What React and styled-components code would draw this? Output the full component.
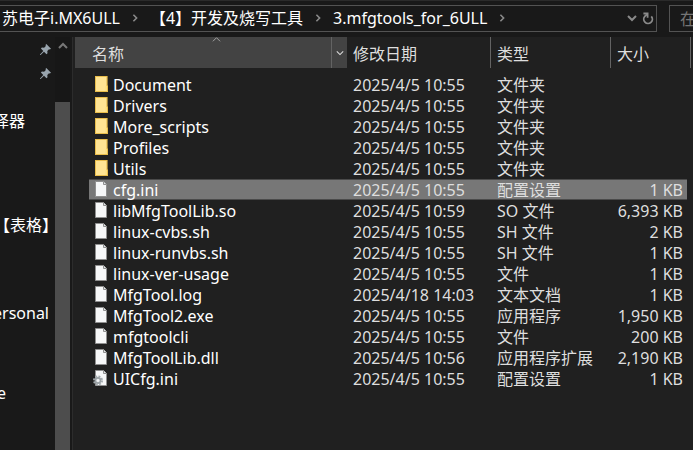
import React, { useState } from 'react';
import styled, { createGlobalStyle } from 'styled-components';

const crumbs = ['苏电子i.MX6ULL', '【4】开发及烧写工具', '3.mfgtools_for_6ULL'];

const navItems = [
  { pinned: true },
  { pinned: true },
  {},
  { label: '译器', width: 25 },
  {},
  {},
  {},
  { label: '【表格】', width: 58, group: true },
  { group: true },
  {},
  { label: 'ersonal', width: 49, group: true },
  {},
  {},
  { label: 'e', width: 6, group: true },
];

const files = [
  { name: 'Document', date: '2025/4/5 10:55', type: '文件夹', icon: 'folder' },
  { name: 'Drivers', date: '2025/4/5 10:55', type: '文件夹', icon: 'folder' },
  { name: 'More_scripts', date: '2025/4/5 10:55', type: '文件夹', icon: 'folder' },
  { name: 'Profiles', date: '2025/4/5 10:55', type: '文件夹', icon: 'folder' },
  { name: 'Utils', date: '2025/4/5 10:55', type: '文件夹', icon: 'folder' },
  { name: 'cfg.ini', date: '2025/4/5 10:55', type: '配置设置', size: '1 KB' },
  { name: 'libMfgToolLib.so', date: '2025/4/5 10:59', type: 'SO 文件', size: '6,393 KB' },
  { name: 'linux-cvbs.sh', date: '2025/4/5 10:55', type: 'SH 文件', size: '2 KB' },
  { name: 'linux-runvbs.sh', date: '2025/4/5 10:55', type: 'SH 文件', size: '1 KB' },
  { name: 'linux-ver-usage', date: '2025/4/5 10:55', type: '文件', size: '1 KB' },
  { name: 'MfgTool.log', date: '2025/4/18 14:03', type: '文本文档', size: '1 KB' },
  { name: 'MfgTool2.exe', date: '2025/4/5 10:55', type: '应用程序', size: '1,950 KB' },
  { name: 'mfgtoolcli', date: '2025/4/5 10:55', type: '文件', size: '200 KB' },
  { name: 'MfgToolLib.dll', date: '2025/4/5 10:56', type: '应用程序扩展', size: '2,190 KB' },
  { name: 'UICfg.ini', date: '2025/4/5 10:55', type: '配置设置', size: '1 KB', icon: 'config' },
];

const Chevron = ({ dir = 'down', size = 9, weight = 1.5 }) => {
  const paths = {
    down: 'M1 3l4 4 4-4',
    up: 'M1 7l4-4 4 4',
    right: 'M3 1l4 4-4 4',
  };
  return (
    <svg width={size} height={size} viewBox="0 0 10 10" fill="none" stroke="currentColor" strokeWidth={weight} aria-hidden="true">
      <path d={paths[dir]} />
    </svg>
  );
};

const RefreshIcon = () => (
  <svg width="12" height="13" viewBox="0 0 12 13" fill="none" stroke="currentColor" strokeWidth="1.8" aria-hidden="true">
    <path d="M9.3 4.3A4.3 4.3 0 1 1 3 4.1L5.2 2.3" />
    <path d="M1.4 1.5h4.2v4.2" />
  </svg>
);

const PinIcon = () => (
  <svg width="11" height="11" viewBox="0 0 11 11" aria-hidden="true">
    <path d="M6.3 0L11 4.7 9.8 5.5 9 5.2 7.3 7l.2 2.2-1 1L4 7.7.6 11H0v-.6L3.3 7 .9 4.6l1-1 2.2.2L5.9 2 5.5 1z" fill="#99a5ae" />
  </svg>
);

const FolderIcon = () => (
  <svg width="16" height="16" viewBox="0 0 16 16" aria-hidden="true">
    <path d="M2 0h12.6v9.6H15V16H2z" fill="#e9bd4b" />
    <path d="M3 1h10.4v14H3z" fill="#ffe494" />
    <path d="M12.5 10H14v5h-1.5z" fill="#ffe07d" />
  </svg>
);

const FileIcon = ({ config }) => (
  <svg width="16" height="16" viewBox="0 0 16 16" aria-hidden="true">
    <path d="M2.5.5h8L13.5 3.5v12h-11z" fill="#f6f7f8" stroke="#8f8f8f" />
    <path d="M10.5.5v3h3" fill="#dfe3e5" stroke="#8f8f8f" />
    {config && (
      <g>
        <circle cx="5" cy="10.5" r="4.1" fill="none" stroke="#a3aaae" strokeWidth="1.8" strokeDasharray="1.9 1.32" />
        <circle cx="5" cy="10.5" r="2.6" fill="#e5e9eb" stroke="#9aa1a5" strokeWidth="1.6" />
        <circle cx="5" cy="10.5" r="1" fill="#f6f7f8" />
      </g>
    )}
  </svg>
);

const EntryIcon = ({ kind }) =>
  kind === 'folder' ? <FolderIcon /> : <FileIcon config={kind === 'config'} />;

const App = () => {
  const [selected, setSelected] = useState('cfg.ini');

  return (
    <Window>
      <GlobalStyle />
      <Toolbar>
        <AddressBar aria-label="地址">
          {crumbs.map((crumb) => (
            <React.Fragment key={crumb}>
              <Crumb href="#">{crumb}</Crumb>
              <CrumbArrow>
                <Chevron dir="right" size={8} weight={2} />
              </CrumbArrow>
            </React.Fragment>
          ))}
          <BarActions>
            <BarButton aria-label="历史记录">
              <Chevron size={10} weight={2} />
            </BarButton>
            <BarButton aria-label="刷新">
              <RefreshIcon />
            </BarButton>
          </BarActions>
        </AddressBar>
        <SearchInput type="text" aria-label="搜索" placeholder="在" />
      </Toolbar>

      <Body>
        <NavPane>
          <NavList>
            {navItems.map((item, i) => (
              <NavItem key={i} $group={item.group}>
                {item.pinned && (
                  <PinSlot>
                    <PinIcon />
                  </PinSlot>
                )}
                {item.label && <NavLabel href="#" $width={item.width}>{item.label}</NavLabel>}
              </NavItem>
            ))}
          </NavList>
          <ScrollTrack>
            <ScrollButton aria-label="向上滚动">
              <Chevron dir="up" size={10} weight={2} />
            </ScrollButton>
            <ScrollThumb />
          </ScrollTrack>
        </NavPane>

        <FilePane>
          <FileTable>
            <colgroup>
              <Col $width={14} />
              <Col $width={258} />
              <Col $width={144} />
              <Col $width={120} />
              <Col $width={76} />
              <Col $width={4} />
            </colgroup>
            <thead>
              <tr>
                <HeadCell colSpan={2} $active>
                  <SortMark>
                    <Chevron dir="up" weight={1} />
                  </SortMark>
                  <HeadInner>
                    <HeadButton $indent={17}>名称</HeadButton>
                    <FilterButton aria-label="筛选">
                      <Chevron size={8} weight={1.3} />
                    </FilterButton>
                  </HeadInner>
                </HeadCell>
                <HeadCell $line><HeadButton $indent={6}>修改日期</HeadButton></HeadCell>
                <HeadCell $line><HeadButton $indent={6}>类型</HeadButton></HeadCell>
                <HeadCell $line colSpan={2}><HeadButton $indent={6}>大小</HeadButton></HeadCell>
              </tr>
            </thead>
            <tbody>
              {files.map((file) => (
                <FileRow
                  key={file.name}
                  $selected={file.name === selected}
                  onClick={() => setSelected(file.name)}
                >
                  <Gutter />
                  <NameCell>
                    <NameInner>
                      <EntryIcon kind={file.icon} />
                      {file.name}
                    </NameInner>
                  </NameCell>
                  <Cell>{file.date}</Cell>
                  <Cell>{file.type}</Cell>
                  <SizeCell>{file.size}</SizeCell>
                  <Gutter />
                </FileRow>
              ))}
            </tbody>
          </FileTable>
        </FilePane>
      </Body>
    </Window>
  );
};

export default App;

const GlobalStyle = createGlobalStyle`
  * {
    box-sizing: border-box;
  }

  body {
    margin: 0;
    background: #191919;
    overflow: hidden;
  }

  body, button, input {
    font-family: 'Noto Sans', 'Noto Sans CJK SC', sans-serif;
    font-size: 16px;
  }

  button {
    border: 0;
    padding: 0;
    background: none;
    color: inherit;
  }

  svg {
    display: block;
    flex: none;
  }
`;

const Window = styled.div`
  display: flex;
  flex-direction: column;
  height: 100vh;
  background: #191919;
  color: #dedede;
  border-top: 1px solid #2b2b2b;
`;

const Toolbar = styled.div`
  display: flex;
  gap: 12px;
  padding-top: 4px;
  padding-bottom: 5px;
`;

const AddressBar = styled.nav`
  flex: 1;
  min-width: 0;
  display: flex;
  align-items: center;
  height: 27px;
  padding-left: 2px;
  padding-bottom: 1px;
  border: 1px solid #535353;
  border-left: 0;
  white-space: nowrap;
  overflow: hidden;
`;

const Crumb = styled.a`
  color: #fff;
  text-decoration: none;
  line-height: 24px;
`;

const CrumbArrow = styled.span`
  display: flex;
  justify-content: center;
  width: 30px;
  color: #8a8a8a;
`;

const BarActions = styled.div`
  display: flex;
  align-self: stretch;
  margin-left: auto;
  color: #8a8a8a;
`;

const BarButton = styled.button`
  display: flex;
  align-items: center;
  justify-content: center;
  width: 16px;
`;

const SearchInput = styled.input`
  flex: none;
  width: 24px;
  height: 27px;
  padding: 0 0 0 10px;
  border: 1px solid #535353;
  border-right: 0;
  border-radius: 0;
  background: #191919;
  color: #fff;
  outline: none;

  &::placeholder {
    color: #757575;
    opacity: 1;
  }
`;

const Body = styled.div`
  flex: 1;
  min-height: 0;
  display: flex;
`;

const NavPane = styled.aside`
  flex: none;
  display: flex;
  width: 75px;
  border-right: 2px solid #202020;
  box-shadow: inset -1px 0 #2c2c2c;
`;

const NavList = styled.div`
  width: 55px;
  overflow: hidden;
`;

const NavItem = styled.div`
  display: flex;
  align-items: center;
  height: 24px;
  margin-top: ${(props) => (props.$group ? '8px' : '0')};
`;

const PinSlot = styled.span`
  margin-left: 40px;
`;

const NavLabel = styled.a`
  display: flex;
  justify-content: flex-end;
  width: ${(props) => props.$width}px;
  color: #fff;
  line-height: 24px;
  text-decoration: none;
  white-space: nowrap;
`;

const ScrollTrack = styled.div`
  display: flex;
  flex-direction: column;
  width: 15px;
  background: #171717;
`;

const ScrollButton = styled.button`
  display: flex;
  justify-content: center;
  height: 65px;
  padding-top: 4px;
  color: #777;
`;

const ScrollThumb = styled.div`
  flex: 1;
  background: #4d4d4d;
`;

const FilePane = styled.main`
  flex: 1;
  min-width: 0;
  overflow: hidden;
  background: #202020;
`;

const FileTable = styled.table`
  table-layout: fixed;
  width: 616px;
  border-collapse: separate;
  border-spacing: 0;
  white-space: nowrap;

  thead::after {
    content: '';
    display: table-row;
    height: 6px;
  }
`;

const Col = styled.col`
  width: ${(props) => props.$width}px;
`;

const HeadCell = styled.th`
  position: relative;
  height: 31px;
  padding: 0;
  font-weight: 400;
  text-align: left;
  background: ${(props) => (props.$active ? '#434343' : 'transparent')};
  border-right: ${(props) => (props.$line ? '1px solid #636363' : '0')};
`;

const HeadInner = styled.div`
  display: flex;
  height: 31px;
`;

const HeadButton = styled.button`
  flex: 1;
  padding-left: ${(props) => props.$indent}px;
  text-align: left;
`;

const FilterButton = styled.button`
  display: flex;
  align-items: center;
  justify-content: center;
  width: 16px;
  border-left: 1px solid #636363;
`;

const SortMark = styled.span`
  position: absolute;
  top: -2px;
  left: 137px;
  color: #aaa;
`;

const Cell = styled.td`
  height: 21px;
  padding: 2px 0 0 6px;
  line-height: 17px;
  border: solid transparent;
  border-width: 1px 0;
`;

const NameCell = styled(Cell)`
  padding: 1px 0 0 4px;
  color: #fff;
`;

const NameInner = styled.div`
  display: flex;
  align-items: flex-start;
  gap: 4px;
  height: 18px;
  line-height: 19px;
`;

const SizeCell = styled(Cell)`
  padding: 2px 4px 0 0;
  text-align: right;
`;

const Gutter = styled.td`
  padding: 0;
`;

const FileRow = styled.tr`
  ${Cell}, ${NameCell}, ${SizeCell} {
    background: ${(props) => (props.$selected ? '#777' : 'transparent')};
    border-color: ${(props) => (props.$selected ? '#4a4a4a' : 'transparent')};
  }
`;
